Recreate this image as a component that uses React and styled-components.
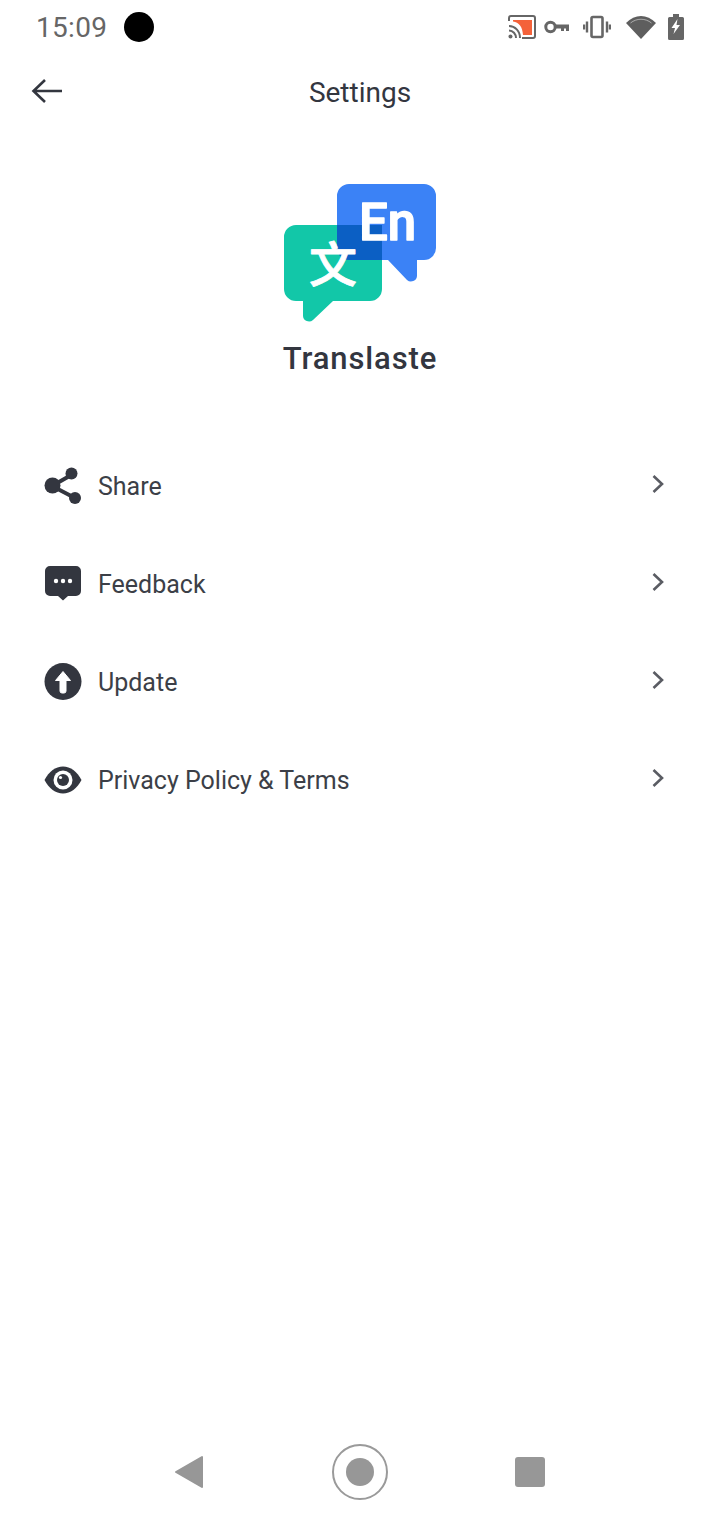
import React from "react";
import styled, { createGlobalStyle } from "styled-components";

const Global = createGlobalStyle`
  html, body {
    margin: 0;
    padding: 0;
    background: #fff;
  }
  * {
    box-sizing: border-box;
  }
`;

const Page = styled.div`
  width: 720px;
  height: 1520px;
  display: flex;
  flex-direction: column;
  background: #fff;
  font-family: Roboto, "Liberation Sans", sans-serif;
  color: #33363f;
`;

const StatusBar = styled.div`
  height: 54px;
  padding: 0 36px;
  display: flex;
  align-items: center;
  justify-content: space-between;
`;

const StatusLeft = styled.div`
  display: flex;
  align-items: center;
  gap: 17px;
`;

const Time = styled.span`
  font-size: 28px;
  letter-spacing: 0.3px;
  color: #666;
`;

const Dot = styled.span`
  width: 30px;
  height: 30px;
  border-radius: 50%;
  background: #000;
`;

const StatusIcons = styled.div`
  display: flex;
  align-items: center;
`;

const StatusIcon = styled.svg`
  margin-left: ${props => props.$before || 0}px;
`;

const Header = styled.div`
  height: 76px;
  padding: 0 32px;
  position: relative;
  display: flex;
  align-items: center;
  justify-content: center;
  margin-bottom: 54px;
`;

const Back = styled.svg`
  position: absolute;
  left: 30px;
  top: 22px;
`;

const HeaderTitle = styled.h1`
  margin: 0;
  font-size: 28px;
  font-weight: 400;
`;

const Brand = styled.div`
  display: flex;
  flex-direction: column;
  align-items: center;
  gap: 16px;
  margin-bottom: 59px;
`;

const BrandName = styled.div`
  font-size: 31px;
  line-height: 38px;
  font-weight: 500;
  letter-spacing: 0.9px;
`;

const Menu = styled.div`
  padding: 0 55px 0 44px;
  display: flex;
  flex-direction: column;
`;

const Row = styled.div`
  height: 98px;
  display: flex;
  align-items: center;
`;

const IconSlot = styled.div`
  width: 38px;
  height: 38px;
  margin-right: 16px;
  display: flex;
  align-items: center;
  justify-content: center;
`;

const Label = styled.span`
  flex: 1;
  font-size: 25px;
  color: #3c3f47;
`;

const Chevron = styled.svg`
  position: relative;
  top: -2px;
`;

const NavBar = styled.div`
  margin-top: auto;
  height: 76px;
  padding: 0 175px 0 174px;
  display: flex;
  align-items: flex-start;
  justify-content: space-between;
`;

const NavItem = styled.div`
  height: 56px;
  display: flex;
  align-items: center;
`;

const HomeRing = styled.div`
  width: 56px;
  height: 56px;
  border-radius: 50%;
  border: 2.5px solid #9a9a9a;
  display: flex;
  align-items: center;
  justify-content: center;
`;

const HomeDot = styled.div`
  width: 28px;
  height: 28px;
  border-radius: 50%;
  background: #979797;
`;

const Recents = styled.div`
  width: 30px;
  height: 30px;
  border-radius: 3px;
  background: #979797;
`;

const rows = [
  {
    label: "Share",
    icon: (
      <svg width="38" height="38" viewBox="0 0 38 38" fill="#33363f">
        <path d="M8 19 L29 7 M8 19 L31 31" stroke="#33363f" strokeWidth="4" />
        <circle cx="8.5" cy="18.5" r="8" />
        <circle cx="27.5" cy="6.5" r="6" />
        <circle cx="31" cy="31" r="6" />
      </svg>
    ),
  },
  {
    label: "Feedback",
    icon: (
      <svg width="38" height="38" viewBox="0 0 38 38">
        <path
          d="M6 1 H32 a5 5 0 0 1 5 5 V26 a5 5 0 0 1 -5 5 H24 L19 35.5 L14 31 H6 a5 5 0 0 1 -5 -5 V6 a5 5 0 0 1 5 -5 Z"
          fill="#33363f"
        />
        <circle cx="12" cy="16" r="2.2" fill="#fff" />
        <circle cx="19" cy="16" r="2.2" fill="#fff" />
        <circle cx="26" cy="16" r="2.2" fill="#fff" />
      </svg>
    ),
  },
  {
    label: "Update",
    icon: (
      <svg width="38" height="38" viewBox="0 0 38 38">
        <circle cx="19" cy="18.5" r="18.5" fill="#33363f" />
        <path
          d="M19 8.5 L26.5 17.5 H22 V28 a2 2 0 0 1 -2 2 H18 a2 2 0 0 1 -2 -2 V17.5 H11.5 Z"
          fill="#fff"
          stroke="#fff"
          strokeLinejoin="round"
        />
      </svg>
    ),
  },
  {
    label: "Privacy Policy & Terms",
    icon: (
      <svg width="38" height="38" viewBox="0 0 38 38">
        <path
          d="M0.5 19 C5 10.5 11.5 5.5 19 5.5 C26.5 5.5 33 10.5 37.5 19 C33 27.5 26.5 32.5 19 32.5 C11.5 32.5 5 27.5 0.5 19 Z"
          fill="#33363f"
        />
        <circle cx="19" cy="19" r="9.5" fill="#fff" />
        <circle cx="19" cy="19" r="6" fill="#33363f" />
        <circle cx="16.5" cy="16.5" r="1.6" fill="#fff" />
      </svg>
    ),
  },
];

function Logo() {
  return (
    <svg width="154" height="140" viewBox="0 0 154 140">
      <path
        d="M54 12 a12 12 0 0 1 12 -12 H141 a12 12 0 0 1 12 12 V64 a12 12 0 0 1 -12 12 H134 V92 a6 6 0 0 1 -10 4 L105 76 H66 a12 12 0 0 1 -12 -12 Z"
        fill="#3b82f6"
      />
      <path
        d="M1 53 a12 12 0 0 1 12 -12 H87 a12 12 0 0 1 12 12 V105 a12 12 0 0 1 -12 12 H50 L30 136 a6 6 0 0 1 -10 -4 V117 H13 a12 12 0 0 1 -12 -12 Z"
        fill="#12c7a8"
      />
      <path d="M54 41 H99 V76 H66 a12 12 0 0 1 -12 -12 Z" fill="#0b5fc4" />
      <text
        x="76"
        y="56"
        fontFamily="Roboto, sans-serif"
        fontWeight="500"
        fontSize="51"
        fill="#fff"
        stroke="#fff"
        strokeWidth="1.4"
        strokeLinejoin="round"
      >
        En
      </text>
      <text
        x="26"
        y="98"
        fontFamily='"Noto Sans CJK SC", sans-serif'
        fontWeight="500"
        fontSize="48"
        fill="#fff"
        stroke="#fff"
        strokeWidth="0.8"
        strokeLinejoin="round"
      >
        文
      </text>
    </svg>
  );
}

export default function App() {
  return (
    <Page>
      <Global />
      <StatusBar>
        <StatusLeft>
          <Time>15:09</Time>
          <Dot />
        </StatusLeft>
        <StatusIcons>
          <StatusIcon width="28" height="24" viewBox="0 0 28 24">
            <path d="M1 6 V3 a2 2 0 0 1 2 -2 H25 a2 2 0 0 1 2 2 V21 a2 2 0 0 1 -2 2 H14" fill="none" stroke="#666" strokeWidth="2" />
            <path d="M5 5 H24 V20 H15 C14.5 12 11 7 5 6.5 Z" fill="#f4623a" />
            <path d="M1 11 C7 11 12 16 12 23 M1 15.5 C5 15.5 8 19 8 23" fill="none" stroke="#666" strokeWidth="2" />
            <circle cx="2.5" cy="21.5" r="2" fill="#666" />
          </StatusIcon>
          <StatusIcon $before={8} width="25" height="16" viewBox="0 0 25 16">
            <circle cx="6.5" cy="8" r="4.7" fill="none" stroke="#666" strokeWidth="3" />
            <path d="M10 5.5 H25 V12 H22 V9.5 H20 V12 H17 V9.5 H10 Z" fill="#666" />
          </StatusIcon>
          <StatusIcon $before={14} width="28" height="24" viewBox="0 0 28 24">
            <rect x="8.5" y="2" width="11" height="20" rx="1.5" fill="none" stroke="#666" strokeWidth="2.6" />
            <path d="M4 6.5 V17.5 M1 9.5 V14.5 M24 6.5 V17.5 M27 9.5 V14.5" stroke="#666" strokeWidth="2.4" />
          </StatusIcon>
          <StatusIcon $before={15} width="30" height="24" viewBox="0 0 30 24">
            <path d="M0 8 C9 -1.5 21 -1.5 30 8 L15 24 Z" fill="#5e5e5e" />
            <path d="M4.5 8 C10.5 3 19.5 3 25.5 8" fill="none" stroke="#fff" strokeWidth="0.8" opacity="0.6" />
          </StatusIcon>
          <StatusIcon $before={12} width="16" height="26" viewBox="0 0 16 26">
            <path d="M5 0 H11 V3 H14.5 a1.5 1.5 0 0 1 1.5 1.5 V24.5 a1.5 1.5 0 0 1 -1.5 1.5 H1.5 a1.5 1.5 0 0 1 -1.5 -1.5 V4.5 a1.5 1.5 0 0 1 1.5 -1.5 H5 Z" fill="#666" />
            <path d="M9.5 5 L3.5 14 H7 L5.5 20 L12 11 H8.5 Z" fill="#fff" />
          </StatusIcon>
        </StatusIcons>
      </StatusBar>
      <Header>
        <Back width="34" height="30" viewBox="0 0 34 30" fill="none" stroke="#33363f" strokeWidth="2.6">
          <path d="M32 15 H4 M15 4 L3.5 15 L15 26" />
        </Back>
        <HeaderTitle>Settings</HeaderTitle>
      </Header>
      <Brand>
        <Logo />
        <BrandName>Translaste</BrandName>
      </Brand>
      <Menu>
        {rows.map(row => (
          <Row key={row.label}>
            <IconSlot>{row.icon}</IconSlot>
            <Label>{row.label}</Label>
            <Chevron width="14" height="20" viewBox="0 0 14 20" fill="none" stroke="#5a5c63" strokeWidth="2.6">
              <path d="M2.5 2 L11 10 L2.5 18" />
            </Chevron>
          </Row>
        ))}
      </Menu>
      <NavBar>
        <NavItem>
          <svg width="30" height="34" viewBox="0 0 30 34">
            <path d="M2 17 L28 2 V32 Z" fill="#979797" stroke="#979797" strokeWidth="2" strokeLinejoin="round" />
          </svg>
        </NavItem>
        <HomeRing>
          <HomeDot />
        </HomeRing>
        <NavItem>
          <Recents />
        </NavItem>
      </NavBar>
    </Page>
  );
}
